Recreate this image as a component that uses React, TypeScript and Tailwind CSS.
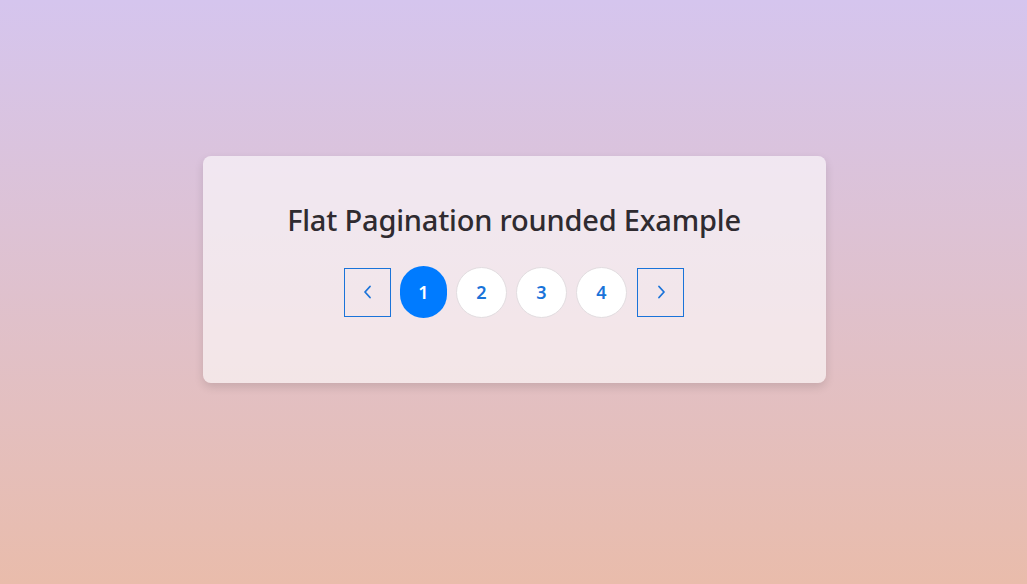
import React from 'react';

const pages = [1, 2, 3, 4];

const Chevron: React.FC<{ dir: 'left' | 'right' }> = ({ dir }) => (
  <svg width="16" height="16" viewBox="0 0 16 16" fill="none" stroke="#1a73d9" strokeWidth="1.8" strokeLinecap="round" strokeLinejoin="round">
    {dir === 'left' ? <path d="M10 2.5 L5 8 L10 13.5" /> : <path d="M6 2.5 L11 8 L6 13.5" />}
  </svg>
);

const App: React.FC = () => {
  return (
    <div
      className="min-h-screen w-full flex justify-center pt-[156px] pl-px bg-gradient-to-b from-[#d5c5ee] to-[#e9bcab]"
      style={{ fontFamily: '"Noto Sans", "Open Sans", sans-serif' }}
    >
      <div className="w-[623px] h-[227px] rounded-lg bg-white/60 shadow-[0_4px_10px_rgba(0,0,0,0.12)] flex flex-col items-center pt-[42px]">
        <h1 className="text-[29px] font-medium text-[#2f2b30] leading-[44px] tracking-[-0.2px]">
          Flat Pagination rounded Example
        </h1>
        <div className="flex items-center gap-[9px] mt-[24px]">
          <button className="w-[47px] h-[49px] border border-[#1a73d9] flex items-center justify-center">
            <Chevron dir="left" />
          </button>
          {pages.map((p) =>
            p === 1 ? (
              <button
                key={p}
                className="w-[47px] h-[52px] rounded-full bg-[#007bff] text-white text-[18px] font-semibold flex items-center justify-center"
              >
                {p}
              </button>
            ) : (
              <button
                key={p}
                className="w-[51px] h-[51px] rounded-full bg-white border border-[#e2dde0] text-[#1a73d9] text-[18px] font-semibold flex items-center justify-center"
              >
                {p}
              </button>
            )
          )}
          <button className="w-[47px] h-[49px] ml-px border border-[#1a73d9] flex items-center justify-center">
            <Chevron dir="right" />
          </button>
        </div>
      </div>
    </div>
  );
};

export default App;
